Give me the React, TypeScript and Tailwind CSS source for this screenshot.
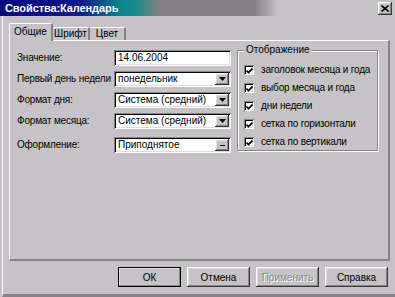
const raised =
  'shadow-[inset_-1px_-1px_0_#3a3a3a,inset_1px_1px_0_#ffffff,inset_-2px_-2px_0_#868486,inset_2px_2px_0_#dedcde]'
const sunken =
  'shadow-[inset_1px_1px_0_#868486,inset_-1px_-1px_0_#ffffff,inset_2px_2px_0_#000000,inset_-2px_-2px_0_#dedcde]'

function Arrow({ dash }: { dash?: boolean }) {
  return (
    <div className={`flex h-[12px] w-[14px] items-center justify-center bg-[#c6c3c6] ${raised}`}>
      {dash ? (
        <div className="h-[1px] w-[5px] bg-black" />
      ) : (
        <svg width="7" height="4" viewBox="0 0 7 4">
          <path d="M0 0H7L3.5 4Z" fill="#000" />
        </svg>
      )}
    </div>
  )
}

function Field({ label, value, select, dash, className = '' }: {
  label: string
  value: string
  select?: boolean
  dash?: boolean
  className?: string
}) {
  return (
    <div className={`flex h-[16px] items-center ${className}`}>
      <span className="w-[97px] whitespace-nowrap text-[10px] leading-none tracking-[-0.2px]">{label}</span>
      <div className={`flex h-[16px] w-[117px] items-center bg-white pl-[4px] pr-[2px] ${sunken}`}>
        <span className="flex-1 truncate text-[10px] leading-none">{value}</span>
        {select && <Arrow dash={dash} />}
      </div>
    </div>
  )
}

function Check({ label }: { label: string }) {
  return (
    <div className="flex h-[10px] items-center gap-[7px]">
      <div className={`flex h-[10px] w-[10px] items-center justify-center bg-white ${sunken}`}>
        <svg width="7" height="6" viewBox="0 0 7 6" className="mt-[1px] ml-[1px]">
          <path d="M0.5 2.5L2.5 4.5L6.5 0.5" stroke="#000" strokeWidth="1.6" fill="none" />
        </svg>
      </div>
      <span className="whitespace-nowrap text-[10px] leading-none tracking-[-0.2px]">{label}</span>
    </div>
  )
}

function Button({ label, primary, disabled }: { label: string; primary?: boolean; disabled?: boolean }) {
  return (
    <div
      className={`flex h-[20px] w-[63px] items-center justify-center text-[10px] ${raised} ${
        primary ? 'outline outline-1 outline-black -outline-offset-1' : ''
      } ${disabled ? 'text-[#868486] [text-shadow:1px_1px_0_#ffffff]' : 'text-black'}`}
    >
      {label}
    </div>
  )
}

export default function App() {
  return (
    <div className="flex h-[297px] w-[395px] flex-col overflow-hidden bg-[#c6c3c6] font-['Liberation_Sans',Arial,sans-serif] text-black">
      <div className="flex h-[16px] shrink-0 items-center justify-between bg-[linear-gradient(to_right,#08087b_0px,#10188c_80px,#08848c_120px,#188a8a_135px,#848284_160px,#848284_255px,#c6c3c6_278px)] pl-[5px] pr-[3px]">
        <span className="text-[11px] font-bold leading-none tracking-[-0.1px] text-white">Свойства:Календарь</span>
        <div className={`mt-[1px] flex h-[13px] w-[14px] items-center justify-center bg-[#c6c3c6] ${raised}`}>
          <svg width="8" height="7" viewBox="0 0 8 7">
            <path d="M0.5 0.5L7.5 6.5M7.5 0.5L0.5 6.5" stroke="#000" strokeWidth="1.6" />
          </svg>
        </div>
      </div>

      <div className="ml-[2px] flex flex-1 flex-col border-b-[3px] border-l border-b-[#868486] border-l-white pl-[6px] pr-[5px]">
        <div className="relative z-10 mt-[7px] flex h-[17px] items-end">
          <div className="-mb-[1px] flex h-[18px] w-[44px] items-start justify-center rounded-t-[2px] border-l border-t border-r-2 border-l-white border-t-white border-r-[#868486] bg-[#c6c3c6] pt-[3px] text-[10px] leading-none">
            Общие
          </div>
          <div className="flex h-[13px] w-[37px] items-start justify-center rounded-t-[2px] border-t border-r-2 border-t-white border-r-[#868486] pt-[1px] text-[10px] leading-none">
            Шрифт
          </div>
          <div className="flex h-[13px] w-[36px] items-start justify-center rounded-t-[2px] border-t border-r-2 border-t-white border-r-[#868486] pt-[1px] text-[10px] leading-none">
            Цвет
          </div>
        </div>

        <div className="flex h-[221px] shrink-0 border-b-2 border-l border-r-2 border-t border-b-[#868486] border-l-white border-r-[#868486] border-t-white pl-[7px] pt-[9px]">
          <div className="flex w-[214px] flex-col">
            <Field label="Значение:" value="14.06.2004" />
            <Field label="Первый день недели" value="понедельник" select className="mt-[5px]" />
            <Field label="Формат дня:" value="Система (средний)" select className="mt-[5px]" />
            <Field label="Формат месяца:" value="Система (средний)" select className="mt-[5px]" />
            <Field label="Оформление:" value="Приподнятое" select dash className="mt-[8px]" />
          </div>

          <div className="relative ml-[6px] flex h-[101px] w-[141px] flex-col gap-[8px] border border-[#868486] pl-[6px] pt-[14px] shadow-[1px_1px_0_#ffffff,inset_1px_1px_0_#ffffff]">
            <span className="absolute -top-[6px] left-[6px] bg-[#c6c3c6] px-[2px] text-[10px] leading-none">
              Отображение
            </span>
            <Check label="заголовок месяца и года" />
            <Check label="выбор месяца и года" />
            <Check label="дни недели" />
            <Check label="сетка по горизонтали" />
            <Check label="сетка по вертикали" />
          </div>
        </div>

        <div className="mt-[6px] flex justify-end gap-[6px] pr-[2px]">
          <Button label="ОК" primary />
          <Button label="Отмена" />
          <Button label="Применить" disabled />
          <Button label="Справка" />
        </div>
      </div>
    </div>
  )
}
